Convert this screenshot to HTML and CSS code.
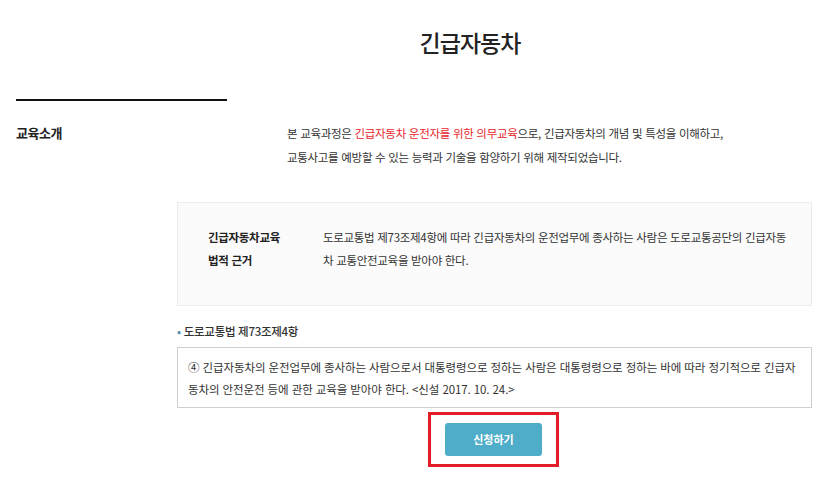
FILE: index.html
```html
<!DOCTYPE html>
<html lang="ko">
<head>
    <meta charset="UTF-8">
    <meta name="viewport" content="width=device-width, initial-scale=1.0">
    <title>긴급자동차</title>
    <link rel="stylesheet" href="styles.css">
</head>
<body>
    <header class="page-head">
        <h1>긴급자동차</h1>
    </header>
    <div class="section-line"></div>
    <section class="intro">
        <h2>교육소개</h2>
        <p>본 교육과정은 <span class="point">긴급자동차 운전자를 위한 의무교육</span>으로, 긴급자동차의 개념 및 특성을 이해하고,<br>교통사고를 예방할 수 있는 능력과 기술을 함양하기 위해 제작되었습니다.</p>
    </section>
    <div class="content">
        <div class="law-box">
            <div class="law-title">긴급자동차교육<br>법적 근거</div>
            <p class="law-text">도로교통법 제73조제4항에 따라 긴급자동차의 운전업무에 종사하는 사람은 도로교통공단의 긴급자동차 교통안전교육을 받아야 한다.</p>
        </div>
        <h3 class="bullet">도로교통법 제73조제4항</h3>
        <div class="article">
            <p>④ 긴급자동차의 운전업무에 종사하는 사람으로서 대통령령으로 정하는 사람은 대통령령으로 정하는 바에 따라 정기적으로 긴급자동차의 안전운전 등에 관한 교육을 받아야 한다. &lt;신설 2017. 10. 24.&gt;</p>
        </div>
        <div class="btn-area">
            <div class="highlight">
                <a href="#apply" class="btn-apply">신청하기</a>
            </div>
        </div>
    </div>
</body>
</html>
```

FILE: styles.css
```css
body {
    font-family: "Noto Sans CJK KR", "Noto Sans", sans-serif;
    margin: 0;
    padding: 0;
    background-color: #fff;
    color: #333;
}
.page-head {
    padding: 25px 0 0 120px;
    text-align: center;
}
.page-head h1 {
    margin: 0;
    font-size: 23px;
    font-weight: 500;
    line-height: 34px;
    letter-spacing: -1px;
    color: #222;
}
.section-line {
    width: 211px;
    height: 2px;
    margin: 40px 0 0 16px;
    background-color: #111;
}
.intro {
    display: grid;
    grid-template-columns: 271px 1fr;
    padding: 20px 0 0 16px;
}
.intro h2 {
    margin: 0;
    font-size: 13px;
    font-weight: bold;
    line-height: 24px;
    color: #222;
    letter-spacing: -0.5px;
}
.intro p {
    margin: 0;
    font-size: 11.5px;
    line-height: 24px;
    letter-spacing: -0.3px;
}
.point {
    color: #e8262b;
}
.content {
    margin: 33px 8px 0 177px;
}
.law-box {
    display: flex;
    height: 104px;
    box-sizing: border-box;
    padding: 23px 20px 0 30px;
    background-color: #fbfbfb;
    border: 1px solid #ececec;
    font-size: 11.5px;
    line-height: 23px;
}
.law-title {
    width: 115px;
    flex-shrink: 0;
    font-weight: bold;
    color: #222;
    letter-spacing: -0.3px;
}
.law-text {
    margin: 0;
    letter-spacing: -0.3px;
}
.bullet {
    margin: 16px 0 0;
    font-size: 11.5px;
    font-weight: 500;
    line-height: 18px;
    color: #333;
    letter-spacing: -0.3px;
}
.bullet::before {
    content: "•";
    color: #5a8fb0;
    margin-right: 3px;
}
.article {
    margin-top: 7px;
    height: 61px;
    box-sizing: border-box;
    padding: 8px 8px 0 10px;
    border: 1px solid #cfcfcf;
}
.article p {
    margin: 0;
    font-size: 11.5px;
    line-height: 22px;
    letter-spacing: -0.1px;
}
.btn-area {
    display: flex;
    justify-content: center;
    padding: 4px 2px 0 0;
}
.highlight {
    padding: 8px 14px;
    border: 3px solid #e41e26;
}
.btn-apply {
    display: block;
    width: 97px;
    height: 33px;
    line-height: 33px;
    border-radius: 3px;
    background-color: #4eadc9;
    color: #fff;
    font-size: 11px;
    font-weight: bold;
    text-align: center;
    text-decoration: none;
}
```
